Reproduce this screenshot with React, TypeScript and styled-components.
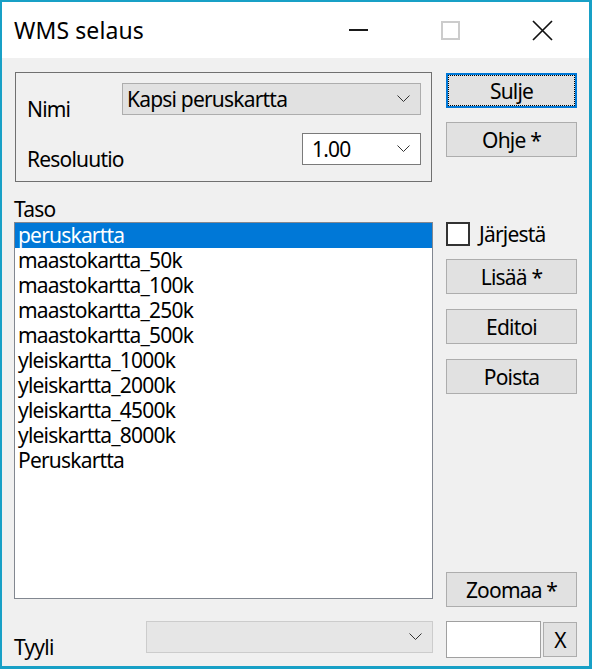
import React from 'react';
import styled, { createGlobalStyle } from 'styled-components';

const GlobalStyle = createGlobalStyle`
  html, body {
    margin: 0;
    padding: 0;
    background: #f0f0f0;
  }
  body {
    font-family: "Noto Sans", "Open Sans", sans-serif;
    font-size: 21px;
    letter-spacing: -0.8px;
    color: #000;
  }
  * {
    box-sizing: border-box;
  }
`;

const Window = styled.div`
  width: 592px;
  height: 669px;
  border: solid #18a0c6;
  border-width: 2px 3px 3px 2px;
  display: flex;
  flex-direction: column;
  background: #f0f0f0;
`;

const TitleBar = styled.div`
  height: 56px;
  flex: none;
  display: flex;
  align-items: center;
  background: #fff;
  padding-right: 1px;
`;

const Title = styled.div`
  flex: 1;
  padding-left: 12px;
  font-size: 23px;
  letter-spacing: 0.1px;
  line-height: 28px;
`;

const CaptionButton = styled.div`
  width: 92px;
  height: 56px;
  display: flex;
  align-items: center;
  justify-content: center;
`;

const Content = styled.div`
  flex: 1;
  display: flex;
  gap: 13px;
  padding: 0 12px 8px 12px;
`;

const LeftColumn = styled.div`
  width: 419px;
  display: flex;
  flex-direction: column;
  padding-top: 14px;
`;

const RightColumn = styled.div`
  width: 131px;
  display: flex;
  flex-direction: column;
  padding-top: 15px;
`;

const GroupBox = styled.div`
  margin: 0 1px;
  height: 110px;
  border: 1px solid #707070;
  padding: 10px 10px 0 11px;
  display: grid;
  grid-template-columns: 95px 1fr;
  grid-template-rows: 32px 32px;
  row-gap: 18px;
`;

const Label = styled.div<{ $width?: number }>`
  line-height: 28px;
  padding-top: 12px;
  width: ${(p) => (p.$width ? `${p.$width}px` : 'auto')};
  flex: none;
  white-space: nowrap;
`;

const Combo = styled.div<{ $variant: 'list' | 'edit' | 'disabled'; $width?: number }>`
  height: 32px;
  width: ${(p) => (p.$width ? `${p.$width}px` : 'auto')};
  justify-self: ${(p) => (p.$width ? 'end' : 'stretch')};
  align-self: start;
  display: flex;
  align-items: center;
  padding: 0 10px 0 ${(p) => (p.$variant === 'edit' ? 9 : 4)}px;
  line-height: 28px;
  background: ${(p) => (p.$variant === 'edit' ? '#fff' : p.$variant === 'list' ? '#e1e1e1' : '#e6e6e6')};
  border: 1px solid ${(p) => (p.$variant === 'edit' ? '#7a7a7a' : p.$variant === 'list' ? '#adadad' : '#cccccc')};
`;

const ComboText = styled.span`
  flex: 1;
  white-space: nowrap;
`;

const FieldLabel = styled.div`
  height: 27px;
  margin-top: 13px;
  line-height: 28px;
`;

const ListBox = styled.div`
  flex: 1;
  background: #fff;
  border: 1px solid #828790;
  margin-bottom: 22px;
  overflow: hidden;
`;

const ListItem = styled.div<{ $selected?: boolean }>`
  height: 25px;
  line-height: 25px;
  padding-left: 3px;
  white-space: nowrap;
  background: ${(p) => (p.$selected ? '#0078d7' : 'transparent')};
  color: ${(p) => (p.$selected ? '#fff' : '#000')};
`;

const BottomRow = styled.div<{ $gap?: number }>`
  height: 37px;
  flex: none;
  margin-top: ${(p) => p.$gap ?? 0}px;
  display: flex;
  align-items: flex-start;
`;

const Button = styled.div<{ $focused?: boolean; $gap?: number }>`
  position: relative;
  height: 35px;
  flex: none;
  margin-top: ${(p) => p.$gap ?? 0}px;
  display: flex;
  align-items: center;
  justify-content: center;
  line-height: 28px;
  background: #e1e1e1;
  border: ${(p) => (p.$focused ? '2px solid #0078d7' : '1px solid #adadad')};
  white-space: nowrap;

  ${(p) =>
    p.$focused &&
    `
    &::after {
      content: '';
      position: absolute;
      inset: 0;
      border: 1px dotted #000;
    }
  `}
`;

const Spacer = styled.div`
  flex: 1;
`;

const CheckRow = styled.label`
  margin-top: 65px;
  height: 24px;
  display: flex;
  align-items: center;
  gap: 9px;
  line-height: 28px;
`;

const CheckBox = styled.span`
  width: 24px;
  height: 24px;
  border: 2px solid #333;
  background: #fff;
`;

const TextBox = styled.div`
  width: 95px;
  height: 37px;
  background: #fff;
  border: 1px solid #a0a0a0;
`;

const SmallButton = styled(Button)`
  width: 34px;
  margin-left: 2px;
  margin-top: 1px;
`;

const Chevron = () => (
  <svg width="13" height="8" viewBox="0 0 13 8">
    <polyline points="0.5,0.5 6.5,6.5 12.5,0.5" fill="none" stroke="#333" strokeWidth="1" />
  </svg>
);

const layers = [
  'peruskartta',
  'maastokartta_50k',
  'maastokartta_100k',
  'maastokartta_250k',
  'maastokartta_500k',
  'yleiskartta_1000k',
  'yleiskartta_2000k',
  'yleiskartta_4500k',
  'yleiskartta_8000k',
  'Peruskartta',
];

const App: React.FC = () => {
  return (
    <>
      <GlobalStyle />
      <Window>
        <TitleBar>
          <Title>WMS selaus</Title>
          <CaptionButton>
            <svg width="19" height="19" viewBox="0 0 19 19">
              <rect x="0" y="8" width="19" height="2" fill="#1a1a1a" />
            </svg>
          </CaptionButton>
          <CaptionButton>
            <svg width="19" height="19" viewBox="0 0 19 19">
              <rect x="1" y="1" width="17" height="17" fill="none" stroke="#cccccc" strokeWidth="2" />
            </svg>
          </CaptionButton>
          <CaptionButton>
            <svg width="21" height="21" viewBox="0 0 21 21">
              <path d="M1 1 L20 20 M20 1 L1 20" stroke="#111" strokeWidth="1.7" />
            </svg>
          </CaptionButton>
        </TitleBar>
        <Content>
          <LeftColumn>
            <GroupBox>
              <Label>Nimi</Label>
              <Combo $variant="list">
                <ComboText>Kapsi peruskartta</ComboText>
                <Chevron />
              </Combo>
              <Label>Resoluutio</Label>
              <Combo $variant="edit" $width={119}>
                <ComboText>1.00</ComboText>
                <Chevron />
              </Combo>
            </GroupBox>
            <FieldLabel>Taso</FieldLabel>
            <ListBox>
              {layers.map((name, i) => (
                <ListItem key={name} $selected={i === 0}>
                  {name}
                </ListItem>
              ))}
            </ListBox>
            <BottomRow>
              <Label $width={132}>Tyyli</Label>
              <Combo $variant="disabled" $width={287}>
                <ComboText />
                <Chevron />
              </Combo>
            </BottomRow>
          </LeftColumn>
          <RightColumn>
            <Button $focused>Sulje</Button>
            <Button $gap={14}>Ohje *</Button>
            <CheckRow>
              <CheckBox />
              Järjestä
            </CheckRow>
            <Button $gap={13}>Lisää *</Button>
            <Button $gap={15}>Editoi</Button>
            <Button $gap={15}>Poista</Button>
            <Spacer />
            <Button>Zoomaa *</Button>
            <BottomRow $gap={14}>
              <TextBox />
              <SmallButton>X</SmallButton>
            </BottomRow>
          </RightColumn>
        </Content>
      </Window>
    </>
  );
};

export default App;
